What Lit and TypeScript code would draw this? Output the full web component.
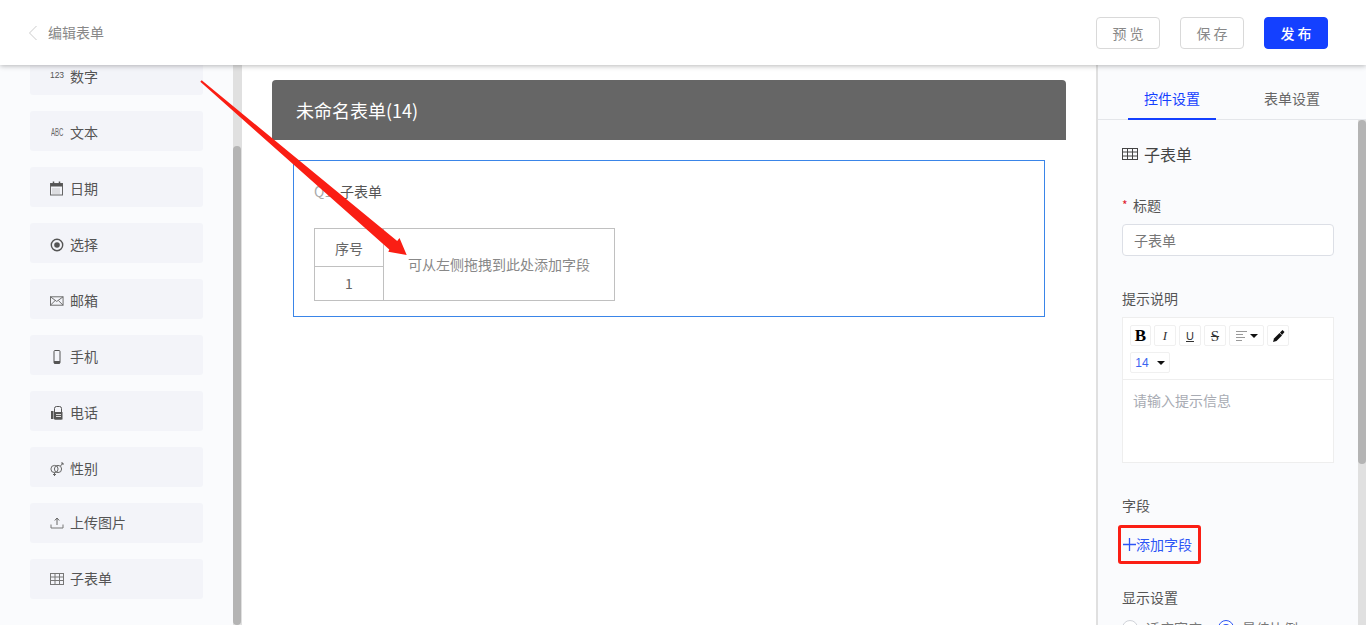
import { LitElement, html, css, svg } from "lit";
import { customElement } from "lit/decorators.js";

const ic = (w: number, h: number, body: unknown) =>
  html`<svg width=${w} height=${h} viewBox="0 0 ${w} ${h}">${body}</svg>`;

const tableIcon = (c: string) =>
  ic(14, 12, svg`<rect x=".5" y=".5" width="13" height="11" fill="none" stroke=${c}/><path d="M.5 4h13M.5 7.500h13M5 .5v11M9.500 .5v11" stroke=${c} fill="none"/>`);

const bigTableIcon = (c: string) =>
  ic(16, 12, svg`<rect x=".5" y=".5" width="15" height="11" fill="none" stroke=${c}/><path d="M.5 4h15M.5 8h15M5.500 .5v11M10.500 .5v11" stroke=${c} fill="none"/>`);

const items: [string, unknown, boolean][] = [
  ["数字", html`<span class="tiny">123</span>`, false],
  ["文本", html`<span class="tiny abc">ABC</span>`, false],
  ["日期", ic(14, 15, svg`<rect x=".5" y="2.500" width="12" height="11.500" fill="none" stroke="#666"/><rect x=".5" y="2.500" width="12" height="3" fill="#555"/><path d="M3.500 .5v3M9.500 .5v3" stroke="#555" stroke-width="1.500"/><path d="M2.500 8h8M2.500 10h8M2.500 12h8" stroke="#999" stroke-dasharray="1 1"/>`), false],
  ["选择", ic(14, 14, svg`<circle cx="7" cy="7" r="5.700" fill="none" stroke="#555" stroke-width="1.400"/><circle cx="7" cy="7" r="2.800" fill="#555"/>`), false],
  ["邮箱", ic(15, 10, svg`<rect x=".5" y=".5" width="13.500" height="9" fill="none" stroke="#666"/><path d="M.5 .5l6.700 5 6.800-5M.5 9.500l5-5M14 9.500l-5-5" fill="none" stroke="#666"/>`), false],
  ["手机", ic(14, 14, svg`<rect x="4" y=".5" width="6" height="13" rx="1" fill="none" stroke="#555"/><rect x="4" y="11" width="6" height="2.500" fill="#555"/>`), false],
  ["电话", ic(14, 14, svg`<rect x="1" y="5" width="2.500" height="8" fill="#555"/><path d="M4.500 13V2.500a2 2 0 0 1 2-2h3a2 2 0 0 1 2 2V13z" fill="none" stroke="#555"/><rect x="4.500" y="6" width="8" height="7.500" fill="#555"/><path d="M6 8.500h5M6 10.500h5" stroke="#ddd"/>`), false],
  ["性别", ic(14, 14, svg`<circle cx="4.500" cy="7" r="3.600" fill="none" stroke="#666"/><circle cx="8" cy="7" r="3.600" fill="none" stroke="#666"/><path d="M4.500 10.500v3.500M3 12.500h3M10.500 4l2.500-3M11 1h2v2" stroke="#666" fill="none"/>`), false],
  ["上传图片", ic(14, 12, svg`<path d="M7 8V1.500M4.800 3.500L7 1l2.200 2.500" stroke="#666" fill="none"/><path d="M1 7.500v3.500h12V7.500" stroke="#777" fill="none"/>`), true],
  ["子表单", tableIcon("#777"), true],
];

@customElement("app-root")
export class AppRoot extends LitElement {
  static styles = css`
    :host { display: block; position: relative; height: 625px; overflow: hidden; font: 14px/20px "Noto Sans CJK SC", "Noto Sans", sans-serif; color: #555; background: #fff; }
    * { box-sizing: border-box; }
    .root { display: flex; flex-direction: column; height: 625px; }
    header { position: relative; z-index: 2; flex: 0 0 65px; background: #fff; box-shadow: 0 1px 5px rgba(0,0,0,.28); display: flex; align-items: center; padding: 0 38px 0 28px; }
    .back { display: flex; margin-right: 10px; }
    .crumb { color: #888; flex: 1; padding-bottom: 2px; }
    .btn { width: 64px; height: 32px; margin-left: 20px; border: 1px solid #d9d9d9; border-radius: 4px; display: flex; align-items: center; justify-content: center; color: #888; letter-spacing: 3px; text-indent: 3px; background: #fff; }
    .btn.primary { background: #1440ff; border-color: #1440ff; color: #fff; font-weight: 500; }
    .main { flex: 1; display: flex; min-height: 0; }
    .side { flex: 0 0 233px; background: #fafbfd; padding: 0 30px; margin-top: -10px; display: flex; flex-direction: column; gap: 16px; }
    .item { height: 40px; flex: none; background: #f3f4f9; border-radius: 3px; display: flex; align-items: center; padding: 2px 0 0 20px; gap: 6px; color: #555; }
    .item.mid { padding: 0 0 2px 20px; }
    .icon { width: 14px; flex: none; display: flex; align-items: center; justify-content: center; margin-top: 1px; }
    .item.mid .icon { margin-top: 2px; }
    .tiny { font: 8.500px/10px "Liberation Sans", sans-serif; color: #555; transform: translateY(-2px); }
    .abc { font-size: 8px; color: #666; transform: scale(.75, 1.25); }
    .track { flex: 0 0 9px; background: #e0e0e0; display: flex; flex-direction: column; }
    .track.l { padding-top: 81px; }
    .track.r { flex-basis: 8px; }
    .thumb { flex: 1; width: 8px; background: #b4b4b4; border-radius: 4px; }
    .thumb.short { flex: 0 0 344px; }
    .canvas { flex: 1; background: #fff; padding: 15px 30px 0; min-width: 0; }
    .form-head { width: 794px; height: 60px; background: #666; border-radius: 4px 4px 0 0; color: #fff; font-size: 18px; padding-left: 24px; display: flex; align-items: center; }
    .box { width: 752px; height: 157px; margin: 20px 0 0 21px; border: 1px solid #3a85e8; padding: 20px 20px 0; }
    .lab { display: flex; height: 20px; color: #555; }
    .q { width: 26px; color: #aaa; }
    .tbl { width: 301px; height: 73px; margin-top: 27px; border: 1px solid #c0c0c0; display: grid; grid-template-columns: 68px 1fr; grid-template-rows: 38px 1fr; }
    .c { display: flex; align-items: center; justify-content: center; color: #666; }
    .c.h { border-bottom: 1px solid #c0c0c0; }
    .c.n { padding-bottom: 2px; }
    .c.r { grid-row: 1 / 3; grid-column: 2; border-left: 1px solid #c0c0c0; color: #888; padding-bottom: 2px; }
    .panel { flex: 0 0 270px; display: flex; flex-direction: column; background: #fafbfd; border-left: 2px solid #e0e0e0; margin-left: -1px; }
    .tabs { flex: 0 0 55px; display: flex; gap: 32px; padding: 0 0 0 30px; border-bottom: 1px solid #e4e6ea; }
    .tab { width: 88px; display: flex; align-items: center; justify-content: center; padding-top: 13px; margin-bottom: -1px; color: #666; border-bottom: 2px solid transparent; }
    .tab.on { color: #1440ff; border-color: #1440ff; }
    .pbody { flex: 1; display: flex; min-height: 0; }
    .fields { flex: 1; padding: 0 24px; min-width: 0; }
    .ptitle { display: flex; align-items: center; gap: 6px; font-size: 16px; color: #444; margin-top: 24px; height: 20px; }
    .pl { color: #555; height: 20px; display: flex; align-items: center; margin-top: 32px; }
    .pl.first { margin-top: 31px; }
    .pl.sm { margin-top: 23px; }
    .req { color: #e0202c; width: 11px; font-size: 12px; }
    .input { height: 32px; margin-top: 9px; border: 1px solid #dcdfe6; border-radius: 4px; background: #fff; display: flex; align-items: center; padding-left: 11px; color: #777; }
    .editor { margin-top: 9px; height: 146px; border: 1px solid #eee; background: #fff; }
    .tools { height: 62px; border-bottom: 1px solid #eee; padding: 7px 20px 0 7px; display: flex; flex-wrap: wrap; gap: 6px 3px; align-content: flex-start; }
    .tool { width: 22px; height: 21px; border: 1px solid #f0f0f0; display: flex; align-items: center; justify-content: center; color: #333; font-family: "Liberation Serif", serif; font-size: 13px; border-radius: 2px; }
    .tool.bold { width: 21px; font-size: 17px; font-weight: 700; color: #000; }
    .tool.it { font-style: italic; }
    .tool.un { text-decoration: underline; font-family: "Liberation Sans", sans-serif; font-size: 11px; }
    .tool.st { text-decoration: line-through; font-size: 15px; }
    .tool.w35 { width: 35px; gap: 3px; }
    .tool.w40 { width: 40px; gap: 8px; color: #3a64f0; font: 12px "Liberation Sans", sans-serif; }
    .caret { width: 0; height: 0; border: 4px solid transparent; border-top-color: #111; border-bottom: 0; }
    .ph { padding: 10px 10px; color: #a8abb3; }
    .add { display: inline-flex; align-items: center; height: 39px; padding: 0 6px 2px 2px; margin-top: 10px; margin-left: -4px; border: 3px solid #fa1e14; border-radius: 3px; color: #2d55f5; }
    .add svg { margin-top: 2px; }
    .radios { display: flex; align-items: center; margin-top: 11px; color: #777; }
    .rd { width: 16px; height: 16px; border: 1px solid #d0d3d9; border-radius: 50%; margin-right: 8px; flex: none; background: #fff; }
    .rd.on { border-color: #2d55f5; position: relative; }
    .rd.on::after { content: ""; position: absolute; inset: 3px; border-radius: 50%; background: #2d55f5; }
    .rl { width: 72px; }
    .arrow { position: absolute; left: 0; top: 0; z-index: 3; pointer-events: none; }
  `;

  render() {
    return html`<div class="root">
      <header>
        <span class="back">${ic(10, 16, svg`<path d="M8.500 1L1.500 8l7 7" fill="none" stroke="#ccc"/>`)}</span>
        <span class="crumb">编辑表单</span>
        <span class="btn">预览</span><span class="btn">保存</span><span class="btn primary">发布</span>
      </header>
      <div class="main">
        <aside class="side">
          ${items.map(([t, i, mid]) => html`<div class="item ${mid ? "mid" : ""}"><span class="icon">${i}</span><span>${t}</span></div>`)}
        </aside>
        <div class="track l"><div class="thumb"></div></div>
        <section class="canvas">
          <div class="form-head">未命名表单(14)</div>
          <div class="box">
            <div class="lab"><span class="q">Q1</span><span>子表单</span></div>
            <div class="tbl">
              <div class="c h">序号</div>
              <div class="c r">可从左侧拖拽到此处添加字段</div>
              <div class="c n">1</div>
            </div>
          </div>
        </section>
        <aside class="panel">
          <div class="tabs"><div class="tab on">控件设置</div><div class="tab">表单设置</div></div>
          <div class="pbody">
            <div class="fields">
              <div class="ptitle">${bigTableIcon("#444")}<span>子表单</span></div>
              <div class="pl first"><span class="req">*</span>标题</div>
              <div class="input">子表单</div>
              <div class="pl">提示说明</div>
              <div class="editor">
                <div class="tools">
                  <span class="tool bold">B</span>
                  <span class="tool it">I</span>
                  <span class="tool un">U</span>
                  <span class="tool st">S</span>
                  <span class="tool w35">${ic(11, 10, svg`<path d="M0 .5h11M0 3.500h7M0 6.500h9M0 9.500h6" stroke="#999"/>`)}<span class="caret"></span></span>
                  <span class="tool">${ic(13, 14, svg`<path d="M1 13l1-3.500 5.500-5.500 2.500 2.500-5.500 5.500z" fill="#111"/><path d="M8 3.500l2.500-2.500 2 2-2.500 3z" fill="#111"/>`)}</span>
                  <span class="tool w40">14<span class="caret"></span></span>
                </div>
                <div class="ph">请输入提示信息</div>
              </div>
              <div class="pl">字段</div>
              <div class="add">${ic(13, 13, svg`<path d="M6.500 0v13M0 6.500h13" stroke="#2d55f5" stroke-width="1.300"/>`)}<span>添加字段</span></div>
              <div class="pl sm">显示设置</div>
              <div class="radios"><span class="rd"></span><span class="rl">适应宽度</span><span class="rd on"></span><span>最佳比例</span></div>
            </div>
            <div class="track r"><div class="thumb short"></div></div>
          </div>
        </aside>
      </div>
      <svg class="arrow" width="1366" height="625"><polygon points="200.300,81.700 201.700,80.300 397.200,240.900 399.500,238 406.700,255 388.300,251.700 389.300,249.500" fill="#fa1e14"/></svg>
    </div>`;
  }
}
